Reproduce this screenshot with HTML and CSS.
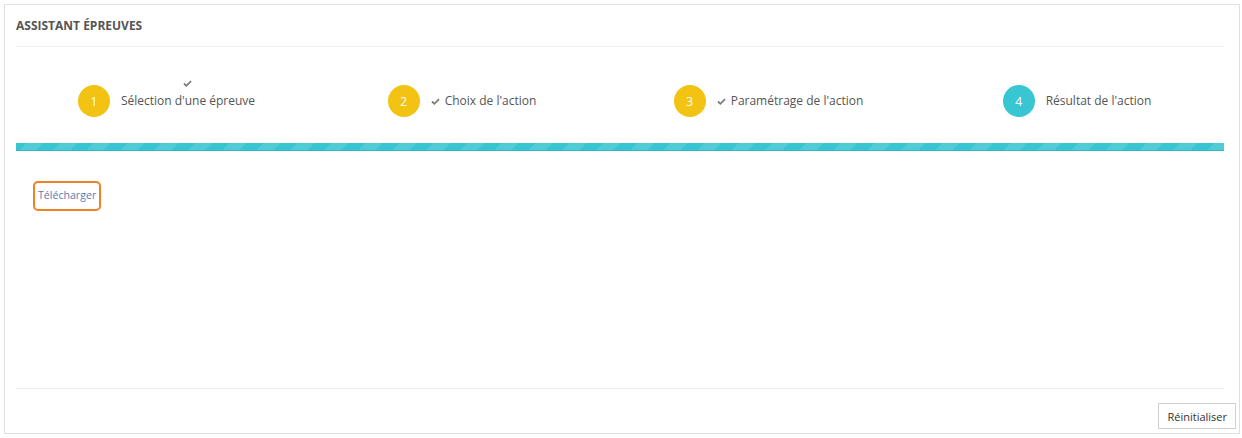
FILE: index.html
```html
<!DOCTYPE html>
<html lang="fr">
<head>
<meta charset="utf-8">
<link rel="stylesheet" href="styles.css">
</head>
<body>
<div class="card">
  <div class="card-header">ASSISTANT ÉPREUVES</div>
  <div class="card-body">
    <div class="steps">
      <div class="step">
        <span class="circle done">1</span>
        <span class="label stacked"><span class="check"><svg viewBox="0 0 10 8" width="9" height="7"><path d="M1 4 L3.7 6.6 L9 1.2" fill="none" stroke="#7a7a7a" stroke-width="2"/></svg></span><span>Sélection d'une épreuve</span></span>
      </div>
      <div class="step">
        <span class="circle done">2</span>
        <span class="label"><span class="check"><svg viewBox="0 0 10 8" width="9" height="7"><path d="M1 4 L3.7 6.6 L9 1.2" fill="none" stroke="#7a7a7a" stroke-width="2"/></svg></span>Choix de l'action</span>
      </div>
      <div class="step">
        <span class="circle done">3</span>
        <span class="label"><span class="check"><svg viewBox="0 0 10 8" width="9" height="7"><path d="M1 4 L3.7 6.6 L9 1.2" fill="none" stroke="#7a7a7a" stroke-width="2"/></svg></span>Paramétrage de l'action</span>
      </div>
      <div class="step">
        <span class="circle current">4</span>
        <span class="label">Résultat de l'action</span>
      </div>
    </div>
    <div class="progress"></div>
    <div class="result">
      <a class="download" href="#">Télécharger</a>
    </div>
  </div>
  <div class="card-footer">
    <button class="btn" type="button">Réinitialiser</button>
  </div>
</div>
</body>
</html>
```
FILE: styles.css
```css
* { box-sizing: border-box; }
html, body { margin: 0; padding: 0; background: #fff; }
body {
  font-family: "Open Sans", "Noto Sans", sans-serif;
  color: #555;
  padding: 4px 2px 4px 4px;
}
.card {
  border: 1px solid #e0e0e0;
  height: 430px;
  display: flex;
  flex-direction: column;
  padding: 0 15px 0 11px;
}
.card-header {
  font-size: 12px;
  font-weight: 700;
  color: #555;
  line-height: 17px;
  padding: 12px 0 12px;
  border-bottom: 1px solid #eeeeee;
}
.card-body {
  flex: 1;
  display: flex;
  flex-direction: column;
  border-bottom: 1px solid #eeeeee;
}
.steps {
  display: grid;
  grid-template-columns: 321px 270px 343px 274px;
  margin: 38px 0 0 -10px;
  height: 32px;
  align-items: center;
}
.step {
  display: flex;
  align-items: center;
  justify-content: center;
  gap: 11px;
  height: 32px;
}
.circle {
  width: 32px;
  height: 32px;
  border-radius: 50%;
  color: #fff;
  font-size: 12px;
  display: flex;
  align-items: center;
  justify-content: center;
  flex: none;
}
.circle.done { background: #f2c312; }
.circle.current { background: #37c6d2; }
.label {
  font-size: 12px;
  color: #555;
  line-height: 17px;
  white-space: nowrap;
  display: flex;
  align-items: center;
  margin-top: -1px;
}
.label .check {
  display: inline-flex;
  margin-right: 5px;
  margin-top: 1px;
}
.label.stacked {
  flex-direction: column;
  margin-bottom: 17px;
}
.label.stacked .check {
  margin: 0;
  height: 17px;
  align-items: center;
}
.progress {
  margin-top: 26px;
  height: 8px;
  background-color: #38c5d2;
  background-image: repeating-linear-gradient(-45deg, rgba(255,255,255,0.12) 0 12px, transparent 12px 24px);
  border-bottom: 1px solid #30b8c4;
}
.result {
  padding: 30px 0 0 17px;
}
.download {
  display: inline-block;
  font-size: 10.6px;
  color: #5b7bb3;
  text-decoration: none;
  border: 2px solid #ef8126;
  border-radius: 5px;
  line-height: 15px;
  padding: 5px 3px 6px 3px;
}
.card-footer {
  height: 44px;
  display: flex;
  justify-content: flex-end;
  align-items: flex-end;
  padding-bottom: 4px;
  margin-right: -12px;
}
.btn {
  font-family: "Open Sans", "Noto Sans", sans-serif;
  font-size: 11px;
  color: #333;
  background: #fff;
  border: 1px solid #d0d0d0;
  border-radius: 0;
  height: 26px;
  padding: 0 8px;
}
```
